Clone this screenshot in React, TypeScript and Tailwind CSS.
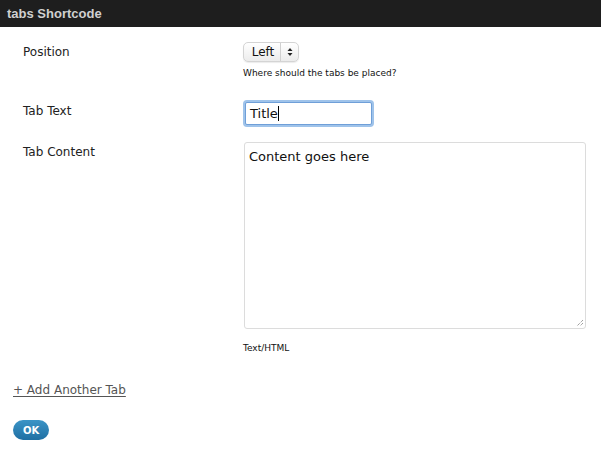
import React from "react";

export default function App() {
  const font = { fontFamily: '"DejaVu Sans", "Liberation Sans", sans-serif' };
  return (
    <div className="w-[601px] h-[452px] bg-white text-[#333]" style={font}>
      <div className="h-[27px] bg-[#1e1e1e] flex items-center pl-[7px]">
        <span className="text-[13px] font-bold text-[#d0d0d0]" style={{ fontFamily: '"Liberation Sans", sans-serif' }}>tabs Shortcode</span>
      </div>
      <div className="pt-[15px]">
        <div className="flex">
          <div className="w-[243px] pl-[23px] pt-[1px] text-[12px] leading-[18px] text-[#222]">Position</div>
          <div className="flex flex-col">
            <div className="flex items-center w-[56px] h-[20px] rounded-[5px] border border-[#d4d4d4] bg-gradient-to-b from-[#ffffff] to-[#ececec] shadow-[0_1px_1px_rgba(0,0,0,0.08)]">
              <span className="flex-1 text-center text-[12px] text-[#111] pl-[2px]">Left</span>
              <span className="w-[18px] h-full border-l border-[#d0d0d0] flex items-center justify-center">
                <svg width="6" height="10" viewBox="0 0 6 10">
                  <path d="M3 1 L5.5 4 H0.5 Z" fill="#222" />
                  <path d="M3 9 L5.5 6 H0.5 Z" fill="#222" />
                </svg>
              </span>
            </div>
            <div className="mt-[5px] text-[9px] leading-[12px] text-[#111]">Where should the tabs be placed?</div>
          </div>
        </div>
        <div className="flex mt-[21px]">
          <div className="w-[243px] pl-[23px] pt-[2px] text-[12px] leading-[18px] text-[#222]">Tab Text</div>
          <div className="w-[131px] h-[27px] rounded-[4px] bg-[#9fc3ea] p-[2px]">
            <div className="w-full h-full bg-white border border-[#6f9fd8] rounded-[2px] flex items-center pl-[4px]">
              <span className="text-[13px] text-[#111]">Title</span>
              <span className="w-[1px] h-[15px] bg-black"></span>
            </div>
          </div>
        </div>
        <div className="flex mt-[15px]">
          <div className="w-[244px] pl-[23px] pt-[1px] text-[12px] leading-[18px] text-[#222]">Tab Content</div>
          <div className="flex flex-col">
            <div className="relative w-[342px] h-[187px] border border-[#dcdcdc] rounded-[3px] px-[4px] pt-[1px]">
              <span className="text-[13px] leading-[18px] text-[#111]">Content goes here</span>
              <svg className="absolute right-[1px] bottom-[1px]" width="8" height="8" viewBox="0 0 8 8">
                <path d="M7 1 L1 7 M7 4 L4 7" stroke="#777" strokeWidth="1" strokeDasharray="1 1" />
              </svg>
            </div>
            <div className="mt-[13px] -ml-[1px] text-[9px] leading-[12px] text-[#111]">Text/HTML</div>
          </div>
        </div>
        <div className="mt-[23px] pl-[13px]">
          <a className="text-[12px] text-[#555] underline underline-offset-[2px]">+ Add Another Tab</a>
        </div>
        <div className="mt-[19px] pl-[13px]">
          <button className="w-[36px] h-[20px] rounded-full bg-gradient-to-b from-[#3b94c6] to-[#1f6fa3] text-white text-[10px] font-bold flex items-center justify-center">OK</button>
        </div>
      </div>
    </div>
  );
}
